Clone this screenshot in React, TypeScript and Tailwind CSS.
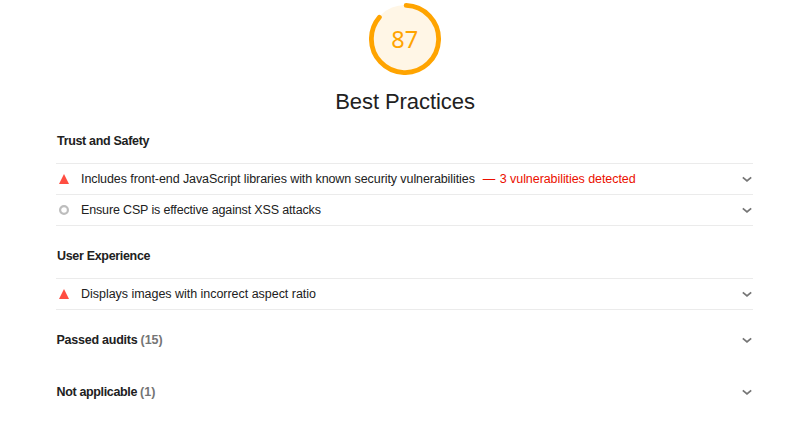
import React from "react";

function Chevron() {
  return (
    <svg className="mr-[1px] shrink-0" width="10" height="7" viewBox="0 0 10 7" fill="none">
      <path d="M0.8 1.4L5 4.9l4.2-3.5" stroke="#757575" strokeWidth="1.8" />
    </svg>
  );
}

function Triangle() {
  return (
    <svg width="10" height="10" viewBox="0 0 10 10">
      <path d="M5 0L10 10H0z" fill="#ff4e42" />
    </svg>
  );
}

function Ring() {
  return (
    <svg width="10" height="10" viewBox="0 0 10 10">
      <circle cx="5" cy="5" r="3.9" fill="none" stroke="#bdbdbd" strokeWidth="2.2" />
    </svg>
  );
}

type AuditProps = { status: "fail" | "info"; title: string; detail?: string; tracking: string };

function Audit({ status, title, detail, tracking }: AuditProps) {
  return (
    <div className="flex h-[31px] items-center border-b border-[#ebebeb]">
      <div className="flex w-[25px] pl-[3px]">{status === "fail" ? <Triangle /> : <Ring />}</div>
      <div className="flex flex-1 whitespace-pre">
        <span className={tracking}>{title}</span>
        {detail && (
          <span className="ml-2 flex text-[#eb0f00]">
            <span className="w-[17px]">—</span>
            <span className="tracking-[-0.07px]">{detail}</span>
          </span>
        )}
      </div>
      <Chevron />
    </div>
  );
}

function Clump({ title, count, tracking }: { title: string; count: number; tracking: string }) {
  return (
    <div className="flex h-[52px] items-center text-[12.5px] font-bold">
      <div className="flex flex-1 gap-[3px] pl-[0.5px]">
        <span className={tracking}>{title}</span>
        <span className="text-[#757575]">({count})</span>
      </div>
      <Chevron />
    </div>
  );
}

export default function App() {
  return (
    <main className="h-[425px] overflow-hidden bg-white pl-[56px] pr-[35px] text-[12.5px] leading-5 text-[#212121] [font-family:'Liberation_Sans',Arial,sans-serif]">
      <header className="flex flex-col items-center pt-[3px]">
        <svg width="72" height="72" viewBox="0 0 72 72">
          <circle cx="36" cy="36" r="34" fill="#fff6e6" />
          <circle cx="36" cy="36" r="33.6" fill="none" stroke="#ffa400" strokeWidth="4.8" strokeLinecap="round" strokeDasharray="180.5 212" transform="rotate(-88 36 36)" />
          <text x="35.8" y="45" textAnchor="middle" fontSize="23.5" fill="#ffa400" className="[font-family:'Noto_Sans',sans-serif]">87</text>
        </svg>
        <h1 className="mt-[11px] pl-px text-[22px] leading-8 tracking-[-0.07px]">Best Practices</h1>
      </header>
      <section className="pt-[13px]">
        <h2 className="h-[33px] border-b border-[#ebebeb] pl-px font-bold tracking-[-0.32px]">Trust and Safety</h2>
        <Audit status="fail" title="Includes front-end JavaScript libraries with known security vulnerabilities" detail="3 vulnerabilities detected" tracking="tracking-[-0.085px]" />
        <Audit status="info" title="Ensure CSP is effective against XSS attacks" tracking="tracking-[-0.15px]" />
      </section>
      <section className="pt-[20px]">
        <h2 className="h-[33px] border-b border-[#ebebeb] pl-px font-bold tracking-[-0.32px]">User Experience</h2>
        <Audit status="fail" title="Displays images with incorrect aspect ratio" tracking="tracking-[-0.03px]" />
      </section>
      <div className="pt-[4px]">
        <Clump title="Passed audits" count={15} tracking="tracking-[-0.24px]" />
        <Clump title="Not applicable" count={1} tracking="tracking-[-0.35px]" />
      </div>
    </main>
  );
}
